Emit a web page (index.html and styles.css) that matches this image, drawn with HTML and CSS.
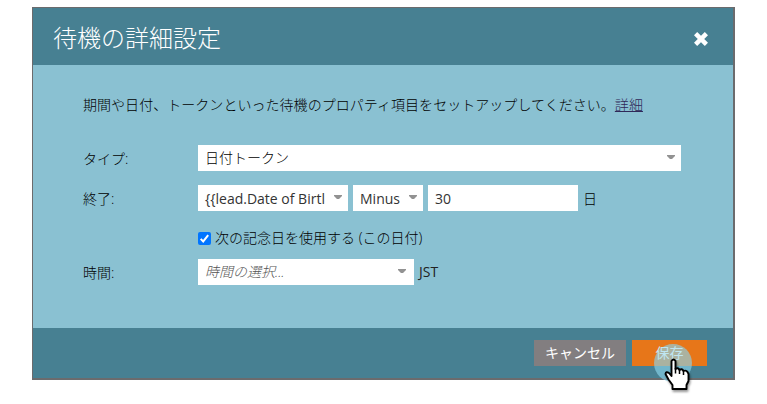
FILE: index.html
```html
<!DOCTYPE html>
<html lang="ja">
<head>
<meta charset="utf-8">
<title>待機の詳細設定</title>
<link rel="stylesheet" href="styles.css">
</head>
<body>
<div class="dialog">
  <header class="header">
    <h1 class="title">待機の詳細設定</h1>
    <svg class="close" width="14" height="14" viewBox="0 0 14 14"><path d="M1.6 1.6 12.4 12.4M12.4 1.6 1.6 12.4" stroke="#fff" stroke-width="4.5"/></svg>
  </header>
  <main class="body">
    <p class="intro">期間や日付、トークンといった待機のプロパティ項目をセットアップしてください。<a class="link">詳細</a></p>
    <div class="row row-type">
      <span class="label">タイプ:</span>
      <div class="field field-type"><span class="value">日付トークン</span><i class="arrow"></i></div>
    </div>
    <div class="row row-end">
      <span class="label">終了:</span>
      <div class="field field-token"><span class="value">{{lead.Date of Birtl</span><i class="arrow"></i></div>
      <div class="field field-op"><span class="value">Minus</span><i class="arrow"></i></div>
      <div class="field field-days"><span class="value">30</span></div>
      <span class="unit">日</span>
    </div>
    <div class="row row-check">
      <span class="label"></span>
      <svg class="check" width="13" height="13" viewBox="0 0 13 13"><rect width="13" height="13" rx="2" fill="#0075ff"/><path d="M2.7 6.9 5.2 9.4 10.2 3.2" fill="none" stroke="#fff" stroke-width="2"/></svg>
      <span class="check-text">次の記念日を使用する (この日付)</span>
    </div>
    <div class="row row-time">
      <span class="label">時間:</span>
      <div class="field field-time"><span class="value placeholder">時間の選択...</span><i class="arrow"></i></div>
      <span class="zone">JST</span>
    </div>
  </main>
  <footer class="footer">
    <div class="button cancel">キャンセル</div>
    <div class="button save"><span class="save-text">保存</span>
      <svg class="pointer" width="44" height="54" viewBox="0 0 44 54">
        <circle cx="21" cy="20" r="19" fill="#8bd2ea" fill-opacity=".65"/>
      </svg>
      <svg class="pointer pointer-hand" width="44" height="54" viewBox="0 0 44 54">
        <path class="hand" d="M19.5 18Q21.500 15 23.500 18V26Q26 24 27.500 27Q30 25 31.500 28Q35 26.500 36.500 31V38L34.500 42V46H20.500V42L16.500 36.500L13.500 31Q14 28 17 30L19.500 33Z" fill="#fff" stroke="#000" stroke-width="1.900" stroke-linejoin="round"/>
        <path d="M23.500 25V30.500M27.500 27V31M31.500 28V32" stroke="#000" stroke-width="1.500"/>
      </svg>
    </div>
  </footer>
</div>
</body>
</html>
```
FILE: styles.css
```css
* { box-sizing: border-box; }
body {
  margin: 0;
  height: 404px;
  padding: 7px 0 0 32px;
  background: #fff;
  font: 300 14px/20px "Open Sans", "Noto Sans CJK JP", sans-serif;
  color: #000;
}
.dialog {
  width: 703px;
  height: 373px;
  border: solid #6b6b6d;
  border-width: 1px 2px 2px 1px;
  display: flex;
  flex-direction: column;
}
.header {
  height: 57px;
  background: #478092;
  display: flex;
  align-items: center;
  justify-content: space-between;
  padding: 3px 25px 0 20px;
}
.title {
  margin: 0;
  font-weight: 300;
  font-size: 24px;
  line-height: 32px;
  color: #fff;
}
.close { margin-top: 1px; }
.body {
  height: 263px;
  background: #8ac1d2;
  padding: 30px 50px 0;
}
.intro { margin: 0 0 30px; white-space: nowrap; letter-spacing: .04px; }
.link { color: #2f2858; text-decoration: underline; }
.row { display: flex; align-items: center; height: 26px; white-space: nowrap; }
.label { width: 115px; flex: none; padding-top: 1px; }
.row-end { margin-top: 14px; }
.row-check { margin-top: 14px; }
.row-time { margin-top: 8px; }
.field {
  height: 26px;
  background: #fff;
  display: flex;
  align-items: center;
  padding: 0 6px 0 7px;
  font-weight: 400;
  color: #333;
}
.field-type { width: 483px; }
.field-token { width: 150px; margin-right: 5px; }
.field-op { width: 70px; margin-right: 5px; }
.field-days { width: 150px; }
.field-time { width: 216px; padding-right: 8px; }
.field-type .value, .field-time .value { font-weight: 300; color: #000; }
.value { flex: 1; }
.field-token .value, .field-op .value, .field-days .value { padding-top: 1px; }
.field-time .placeholder { color: #555; font-style: italic; }
.arrow {
  flex: none;
  width: 8px;
  height: 4px;
  margin: -2px 0 0 auto;
  background: #929292;
  clip-path: polygon(0 0, 100% 0, 100% 25%, 63% 100%, 37% 100%, 0 25%);
}
.unit { margin-left: 5px; padding-top: 1px; }
.check { margin-right: 4px; }
.zone { margin-left: 5px; font-weight: 400; color: #222; }
.footer {
  height: 50px;
  background: #478092;
  display: flex;
  justify-content: flex-end;
  gap: 6px;
  padding: 12px 26px 0 0;
}
.button {
  height: 26px;
  line-height: 26px;
  color: #fff;
  text-align: center;
  font-weight: 400;
}
.cancel { width: 92px; background: #827e80; }
.save { width: 75px; background: #e77619; position: relative; }
.save-text { position: relative; z-index: 1; color: #bfe6f2; }
.pointer { position: absolute; left: 20px; top: 3px; overflow: visible; }
.pointer-hand { z-index: 2; }
.hand { filter: drop-shadow(1px 2px 1px rgba(0, 0, 0, .4)); }
```
